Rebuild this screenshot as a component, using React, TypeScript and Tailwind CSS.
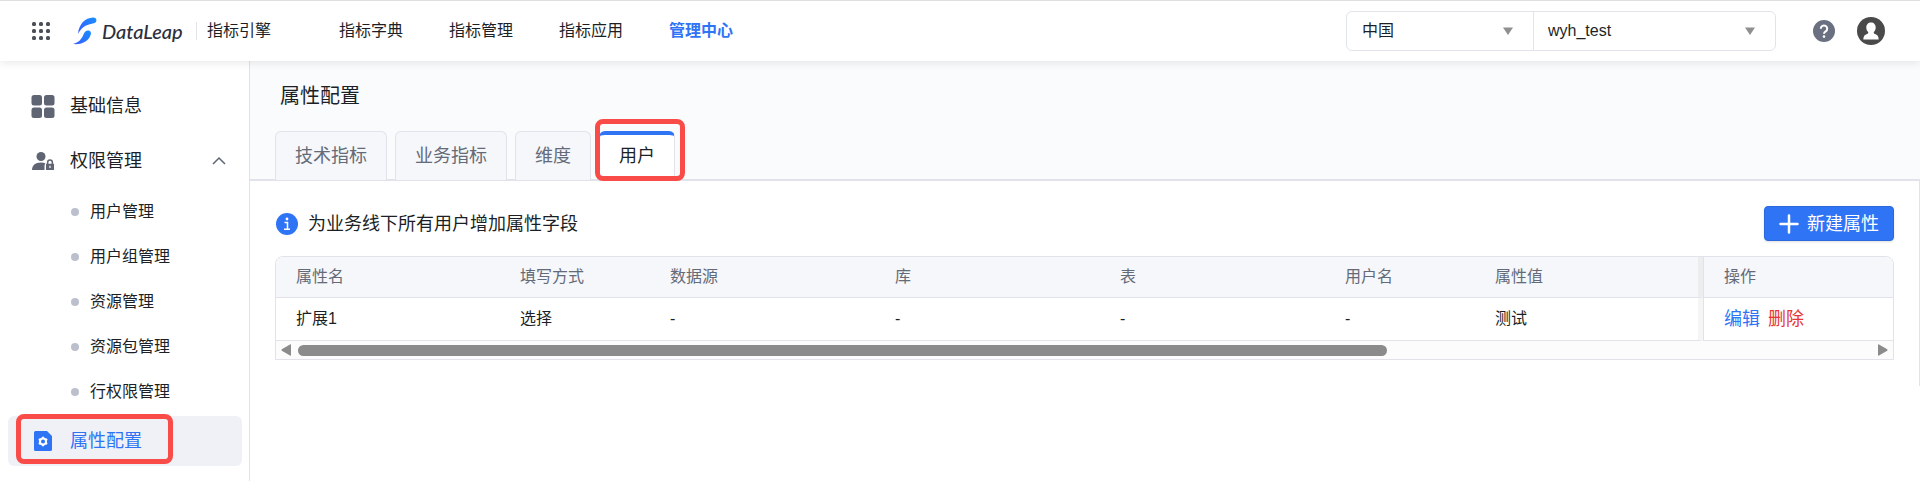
import type { ReactNode } from "react";

const navItems = [
  { label: "指标字典", active: false },
  { label: "指标管理", active: false },
  { label: "指标应用", active: false },
  { label: "管理中心", active: true },
];

const permissionItems = ["用户管理", "用户组管理", "资源管理", "资源包管理", "行权限管理"];

const tabs = ["技术指标", "业务指标", "维度", "用户"];
const activeTab = "用户";

const columns = [
  { label: "属性名", width: "w-[224px]" },
  { label: "填写方式", width: "w-[150px]" },
  { label: "数据源", width: "w-[225px]" },
  { label: "库", width: "w-[225px]" },
  { label: "表", width: "w-[225px]" },
  { label: "用户名", width: "w-[150px]" },
];

const rows = [{ cells: ["扩展1", "选择", "-", "-", "-", "-"], value: "测试" }];

function AppsIcon() {
  return (
    <svg width="20" height="20" viewBox="0 0 20 20" fill="#4b4f57">
      {[3, 10, 17].map((y) =>
        [3, 10, 17].map((x) => <rect key={`${x}-${y}`} x={x - 2} y={y - 2} width="4" height="4" rx="1.500" />)
      )}
    </svg>
  );
}

function Logo() {
  return (
    <svg width="24" height="28" viewBox="0 0 24 28">
      <defs>
        <linearGradient id="leap" x1="0" y1="1" x2="1" y2="0">
          <stop offset="0" stopColor="#3a5bff" />
          <stop offset="1" stopColor="#1890ff" />
        </linearGradient>
      </defs>
      <path d="M5 17C6 7 12 1 20 .6c3-.1 4.200 2.200 3 4.200-1 1.600-2.700 1.800-5 2.100C12 7.900 8 11 5 17z" fill="url(#leap)" />
      <path d="M0 27c6-1.500 8.500-5 10.500-9.500 1-2.400 2.500-4 4.500-4 2.600 0 3.600 2.300 2.600 4.600C15.500 24 9.500 28 0 27z" fill="url(#leap)" />
    </svg>
  );
}

function Caret() {
  return (
    <svg
      width="10"
      height="8"
      viewBox="0 0 10 8"
      fill="#8f8f8f"
      className="pointer-events-none absolute top-1/2 right-5 -translate-y-1/2"
    >
      <path d="M0 .5h10L5 8z" />
    </svg>
  );
}

function HelpIcon() {
  return (
    <svg width="22" height="22" viewBox="0 0 22 22">
      <circle cx="11" cy="11" r="11" fill="#6a7080" />
      <path d="M7.800 8.700a3.200 3.200 0 1 1 4.900 2.700c-1.100.7-1.700 1.200-1.700 2.400" fill="none" stroke="#fff" strokeWidth="2" />
      <circle cx="11" cy="16.600" r="1.300" fill="#fff" />
    </svg>
  );
}

function AvatarIcon() {
  return (
    <svg width="28" height="28" viewBox="0 0 28 28">
      <circle cx="14" cy="14" r="14" fill="#4a4a4a" />
      <path
        d="M14 5.500c2.900 0 4.700 2.100 4.700 5 0 2-.8 3.700-2 4.700 0 .9.300 1.300 1.300 1.700 2.300.9 3.700 2.200 3.700 5.600H6.300c0-3.400 1.400-4.700 3.700-5.600 1-.4 1.300-.8 1.300-1.700-1.200-1-2-2.700-2-4.700 0-2.900 1.800-5 4.700-5z"
        fill="#fff"
      />
    </svg>
  );
}

function GridIcon() {
  return (
    <svg width="24" height="24" viewBox="0 0 24 24" fill="#5f6573">
      <rect x="0.500" y="1" width="10.500" height="10.500" rx="2.500" />
      <rect x="13" y="1" width="10.500" height="10.500" rx="2.500" />
      <rect x="0.500" y="13.500" width="10.500" height="10.500" rx="2.500" />
      <rect x="13" y="13.500" width="10.500" height="10.500" rx="2.500" />
    </svg>
  );
}

function UserLockIcon() {
  return (
    <svg width="24" height="24" viewBox="0 0 24 24" fill="#5f6573">
      <circle cx="10" cy="7.500" r="4.500" />
      <path d="M1 21c0-4.500 3-7.500 9-7.500 1.800 0 3.300.3 4.500.9-.7.500-1 1.200-1 2V21z" />
      <path
        fillRule="evenodd"
        d="M15 14.700h.9v-1.400a3.100 3.100 0 0 1 6.200 0v1.400h.9v6.300h-8zm2.400 0h3.200v-1.300a1.600 1.600 0 0 0-3.200 0zm1 2v2.200h1.200v-2.200z"
      />
    </svg>
  );
}

function ConfigIcon() {
  return (
    <svg width="24" height="24" viewBox="0 0 24 24">
      <path d="M4.500 2H16l5 5v13.500a1.500 1.500 0 0 1-1.500 1.500h-15A1.500 1.500 0 0 1 3 20.500v-17A1.500 1.500 0 0 1 4.500 2z" fill="#2f74f5" />
      <circle cx="12" cy="12.500" r="3" fill="none" stroke="#fff" strokeWidth="2" />
      <path d="M12 7.700v2M12 15.300v2M7.800 10.100l1.800 1M14.400 13.900l1.800 1M16.200 10.100l-1.800 1M9.600 13.900l-1.800 1" stroke="#fff" strokeWidth="2" />
    </svg>
  );
}

function InfoIcon() {
  return (
    <svg width="22" height="22" viewBox="0 0 22 22">
      <circle cx="11" cy="11" r="11" fill="#2f74f5" />
      <circle cx="11" cy="6" r="1.400" fill="#fff" />
      <path d="M8.500 9.500h3v6.500M8 16.300h6" fill="none" stroke="#fff" strokeWidth="1.500" />
    </svg>
  );
}

function Highlight({ className }: { className: string }) {
  return <span className={`pointer-events-none absolute z-10 rounded-lg border-5 border-[#f94c48] ${className}`} />;
}

function SideLink({ icon, children }: { icon: ReactNode; children: ReactNode }) {
  return (
    <a href="#" className="flex h-[50px] items-center gap-[15px] pr-4 pl-[23px] text-lg">
      {icon}
      {children}
    </a>
  );
}

function Header() {
  return (
    <header className="relative z-20 flex h-[61px] items-center border-t border-[#dedede] bg-white pr-[35px] pl-[31px] shadow-[0_2px_8px_rgba(0,0,0,0.09)]">
      <button type="button" aria-label="应用">
        <AppsIcon />
      </button>
      <a href="#" className="ml-[22px] flex items-center gap-[5px]">
        <Logo />
        <span className="w-[86px] font-['Lato'] text-xl font-medium text-[#2c2f3e] italic">DataLeap</span>
      </a>
      <span className="ml-2 h-[18px] w-px bg-[#e3e4e8]" />
      <span className="ml-2.5 text-base">指标引擎</span>
      <nav className="ml-[68px] flex gap-[46px] text-base">
        {navItems.map((item) => (
          <a key={item.label} href="#" className={item.active ? "font-bold text-[#2f74f5]" : ""}>
            {item.label}
          </a>
        ))}
      </nav>

      <div className="ml-auto flex h-10 rounded-md border border-[#e2e4ec]">
        <div className="relative w-[187px] border-r border-[#e2e4ec]">
          <select aria-label="地区" className="h-full w-full appearance-none px-[15px] text-base outline-none">
            <option>中国</option>
          </select>
          <Caret />
        </div>
        <div className="relative w-[241px]">
          <select aria-label="项目" className="h-full w-full appearance-none px-3.5 text-base outline-none">
            <option>wyh_test</option>
          </select>
          <Caret />
        </div>
      </div>
      <button type="button" aria-label="帮助" className="ml-[37px]">
        <HelpIcon />
      </button>
      <button type="button" aria-label="账号" className="ml-[22px]">
        <AvatarIcon />
      </button>
    </header>
  );
}

function Sidebar() {
  return (
    <aside className="w-[250px] shrink-0 border-r border-[#e2e3ea] pt-5 pr-[7px] pb-[15px] pl-2">
      <SideLink icon={<GridIcon />}>基础信息</SideLink>
      <button type="button" className="mt-[5px] flex h-[50px] w-full items-center gap-[15px] pr-4 pl-[23px] text-lg">
        <UserLockIcon />
        权限管理
        <svg width="14" height="14" viewBox="0 0 14 14" fill="none" stroke="#5f6573" strokeWidth="1.500" className="ml-auto">
          <path d="M1 10l6-6 6 6" />
        </svg>
      </button>
      <ul className="mt-[3px] mb-0.5">
        {permissionItems.map((item) => (
          <li key={item}>
            <a href="#" className="flex h-[45px] items-center gap-[11px] pl-[63px] text-base">
              <span className="size-2 rounded-full bg-[#bcc0cc]" />
              {item}
            </a>
          </li>
        ))}
      </ul>
      <div className="relative rounded-md bg-[#f0f1f6] text-[#2f74f5]">
        <SideLink icon={<ConfigIcon />}>属性配置</SideLink>
        <Highlight className="-top-0.5 left-2 h-[50px] w-[157px]" />
      </div>
    </aside>
  );
}

function Tab({ label, active }: { label: string; active: boolean }) {
  return (
    <div className="relative">
      <button
        type="button"
        role="tab"
        aria-selected={active}
        className={`h-[49px] rounded-t-md border border-b-0 px-[19px] text-lg ${
          active
            ? "border-[#e2e3ea] border-t-4 border-t-[#2f74f5] bg-white pb-1"
            : "border-[#e2e3ea] bg-[#f5f7fa] text-[#646a78]"
        }`}
      >
        {label}
      </button>
      {active && <Highlight className="-top-3 -left-1 h-[62px] w-[90px]" />}
    </div>
  );
}

function AttributeTable() {
  return (
    <div className="mt-[15px] overflow-hidden rounded-t-lg border border-[#e2e3ea]">
      <table className="w-full table-fixed border-separate border-spacing-0 text-left text-base">
        <thead>
          <tr className="h-[41px] bg-[#f5f7fa] text-[#646a78]">
            {columns.map((col) => (
              <th key={col.label} className={`border-b border-[#e2e3ea] pl-5 font-normal ${col.width}`}>
                {col.label}
              </th>
            ))}
            <th className="border-r-5 border-b border-[#e2e3ea] border-r-[#ebedef] pl-5 font-normal">属性值</th>
            <th className="w-[190px] border-b border-l border-[#e2e3ea] pl-5 font-normal">操作</th>
          </tr>
        </thead>
        <tbody>
          {rows.map((row) => (
            <tr key={row.cells[0]} className="h-[43px]">
              {row.cells.map((cell, i) => (
                <td key={i} className="border-b border-[#e2e3ea] pl-5">
                  {cell}
                </td>
              ))}
              <td className="border-r-5 border-b border-[#e2e3ea] border-r-[#f5f5f5] pl-5">{row.value}</td>
              <td className="border-b border-l border-[#e2e3ea] pl-5 text-lg leading-6">
                <button type="button" className="text-[#2f74f5]">
                  编辑
                </button>
                <button type="button" className="ml-2 text-[#e63535]">
                  删除
                </button>
              </td>
            </tr>
          ))}
        </tbody>
      </table>
      <div className="flex h-[18px] items-center justify-between bg-[#fcfcfc] px-[5px]">
        <svg width="10" height="12" viewBox="0 0 10 12" fill="#8b8b8b">
          <path d="M10 1v10q0 1-1 .6L.8 6.800q-.8-.8 0-1.600L9 .4q1-.4 1 .6z" />
        </svg>
        <div className="mx-[7px] h-[11px] flex-1">
          <div className="h-full w-[69.2%] rounded-full bg-[#8b8b8b]" />
        </div>
        <svg width="10" height="12" viewBox="0 0 10 12" fill="#8b8b8b">
          <path d="M0 1v10q0 1 1 .6l8.200-4.800q.8-.8 0-1.600L1 .4Q0 0 0 1z" />
        </svg>
      </div>
    </div>
  );
}

export default function App() {
  return (
    <div className="flex min-h-screen flex-col bg-white font-['Liberation_Sans','Noto_Sans_CJK_SC',sans-serif] text-[#1c1f26]">
      <Header />
      <div className="flex flex-1">
        <Sidebar />
        <main className="min-w-0 flex-1">
          <div className="border-b border-[#e2e3ea] bg-[#fafbfd] pt-[21px] pl-[25px]">
            <h1 className="pl-[5px] text-xl">属性配置</h1>
            <div role="tablist" className="mt-[21px] -mb-px flex gap-2">
              {tabs.map((tab) => (
                <Tab key={tab} label={tab} active={tab === activeTab} />
              ))}
            </div>
          </div>
          <section className="border-t border-r border-[#e2e3ea] px-[25px] pt-[25px] pb-[26px]">
            <div className="flex items-center justify-between">
              <p className="flex items-center gap-2.5 pl-px text-lg">
                <InfoIcon />
                为业务线下所有用户增加属性字段
              </p>
              <button
                type="button"
                className="flex h-[35px] items-center gap-2 rounded-sm border border-[#2a68dc] bg-[#2f74f5] px-3.5 text-lg text-white shadow-sm"
              >
                <svg width="20" height="20" viewBox="0 0 20 20" stroke="#fff" strokeWidth="2.500" strokeLinecap="round">
                  <path d="M10 1.500v17M1.500 10h17" />
                </svg>
                新建属性
              </button>
            </div>
            <AttributeTable />
          </section>
        </main>
      </div>
    </div>
  );
}
